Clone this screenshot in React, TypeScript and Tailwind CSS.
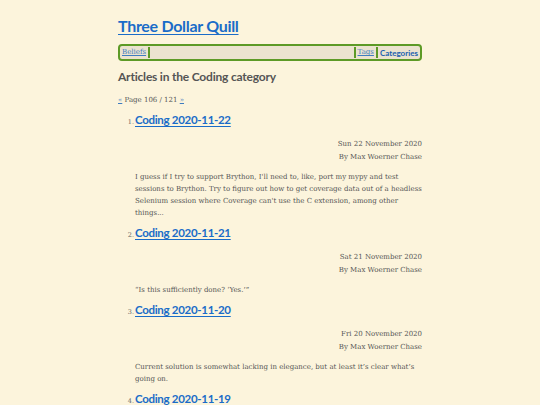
const posts = [
  {
    n: 1,
    title: "Coding 2020-11-22",
    date: "Sun 22 November 2020",
    summary:
      "I guess if I try to support Brython, I'll need to, like, port my mypy and test sessions to Brython. Try to figure out how to get coverage data out of a headless Selenium session where Coverage can't use the C extension, among other things...",
  },
  {
    n: 2,
    title: "Coding 2020-11-21",
    date: "Sat 21 November 2020",
    summary: "\u201cIs this sufficiently done? \u2018Yes.\u2019\u201d",
  },
  {
    n: 3,
    title: "Coding 2020-11-20",
    date: "Fri 20 November 2020",
    summary:
      "Current solution is somewhat lacking in elegance, but at least it\u2019s clear what\u2019s going on.",
  },
  {
    n: 4,
    title: "Coding 2020-11-19",
    date: "Thu 19 November 2020",
    summary: "",
  },
];

const sans = "font-['Lato','Open_Sans',sans-serif]";
const serif = "font-['DejaVu_Serif','Liberation_Serif',serif]";

function Sep() {
  return <span className="inline-block w-[2px] h-[11px] bg-[#5d9a26] mx-[2px]" />;
}

export default function App() {
  return (
    <div className="h-screen bg-[#fcf4dc] overflow-hidden">
      <div className="w-[304px] mx-auto pt-[15px]">
        <h1 className={`${sans} text-[16px] tracking-[-0.3px] font-bold leading-[22px] text-[#1a6cc8] underline underline-offset-2`}>
          Three Dollar Quill
        </h1>

        <nav className="mt-[7px] h-[17px] border-2 border-[#5d9a26] rounded-[4px] bg-[#ebe3cf] flex items-center px-[2px]">
          <a className={`${serif} text-[7px] text-[#3e7cc0] underline`}>Beliefs</a>
          <Sep />
          <div className="flex-1" />
          <Sep />
          <a className={`${serif} text-[7px] text-[#3e7cc0] underline`}>Tags</a>
          <Sep />
          <a className={`${sans} text-[8px] font-bold text-[#1a5fae]`}>Categories</a>
        </nav>

        <h2 className={`${sans} mt-[7px] text-[12px] tracking-[-0.2px] font-bold leading-[18px] text-[#555]`}>
          Articles in the Coding category
        </h2>

        <div className={`${serif} mt-[9px] text-[7px] leading-[10px] text-[#555]`}>
          <a className="text-[#3e7cc0] underline">«</a> Page 106 / 121{" "}
          <a className="text-[#3e7cc0] underline">»</a>
        </div>

        <ol className="mt-[6px] flex flex-col">
          {posts.map((p) => (
            <li key={p.n} className="pb-[5px]">
              <div className="flex items-baseline">
                <span className={`${serif} w-[17px] text-right pr-[1px] text-[6.5px] text-[#666]`}>{p.n}.</span>
                <a className={`${sans} text-[11.5px] tracking-[-0.3px] font-bold leading-[18px] text-[#1a6cc8] underline underline-offset-2`}>
                  {p.title}
                </a>
              </div>
              <div className={`${serif} mt-[9px] text-right text-[7px] leading-[13px] text-[#555]`}>
                <div>{p.date}</div>
                <div>By Max Woerner Chase</div>
              </div>
              {p.summary && (
                <p className={`${serif} mt-[7px] ml-[17px] text-[7px] leading-[12px] text-[#555]`}>
                  {p.summary}
                </p>
              )}
            </li>
          ))}
        </ol>
      </div>
    </div>
  );
}
